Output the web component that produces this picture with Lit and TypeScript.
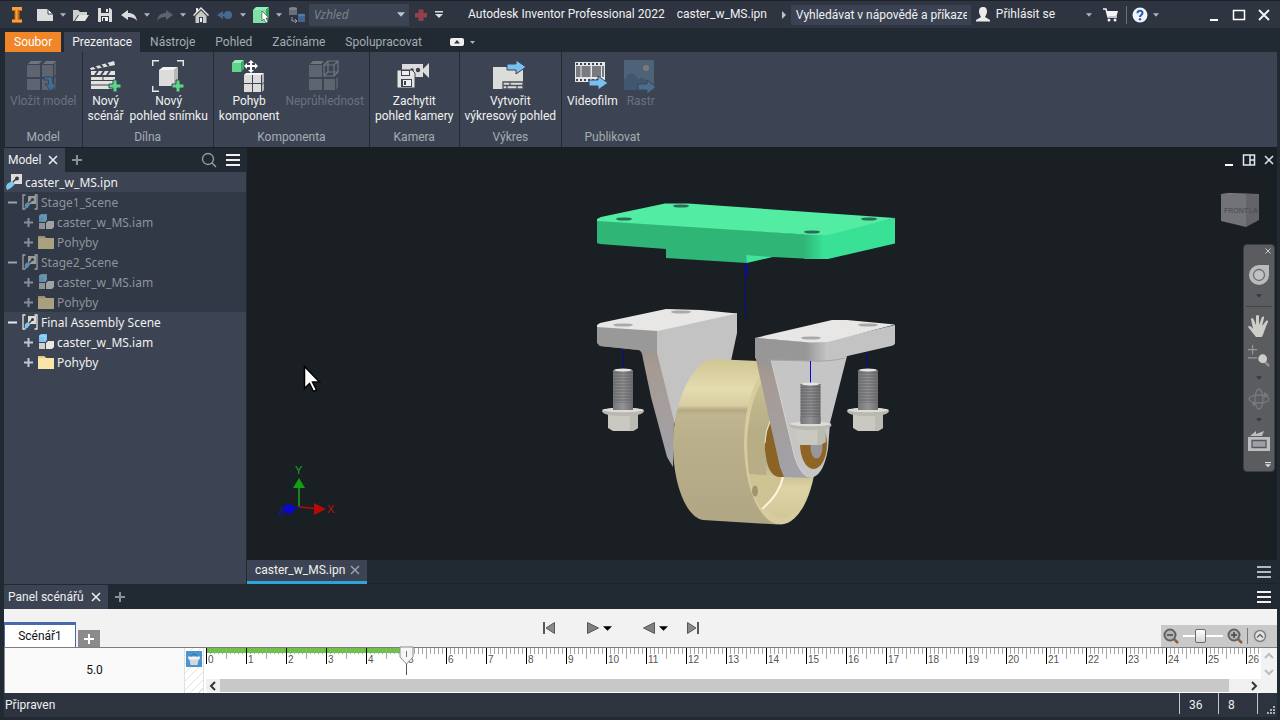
import { LitElement, html, svg, css, nothing } from "lit";
import { customElement } from "lit/decorators.js";
import { classMap } from "lit/directives/class-map.js";

const cubes = (top: string, a: string, b: string) => svg`
  <path d="M2 4l3-3h11l-3 3z" fill=${top}/><path d="M17 4l3-3h10l-3 3z" fill=${top}/>
  <path d="M1 5h13v12H1z" fill=${a}/><path d="M16 5h11v12H16z" fill=${a}/>
  <path d="M1 19h13v11H1z" fill=${a}/><path d="M16 19h11v11H16z" fill=${a}/>
  <path d="M28 4l2-3v13l-2 3zM28 19l2-3v11l-2 3z" fill=${b}/>`;

const icons: Record<string, unknown> = {
  logo: svg`<path d="M3 0h10v4h-2.500v8H13v4H3v-4h2.500V4H3z" fill="#c96a14"/><path d="M3 0h10v3H3zM6.500 3h2v10h-2zM3 13h10v2H3z" fill="#f7a13c"/>`,
  newDoc: svg`<path d="M0 2h11l5 5v7H0z" fill="#dcdcdc"/><path d="M11 2v5h5z" fill="#fff" stroke="#3a4150" stroke-width="1"/>`,
  open: svg`<path d="M0 14V3h5l2 2h7v3H5l-4 6z" fill="#cfcfcf"/><path d="M2 14l4-6h10l-4 6z" fill="#e4e4e4"/>`,
  save: svg`<path d="M1 1h12l2 2v12H1z" fill="#dcdcdc"/><path d="M4 1h8v5H4zM4 9h8v6H4z" fill="#2f3441"/><path d="M9 2h2v3H9z" fill="#eee"/><path d="M5 10h6v4H5z" fill="#f4f4f4"/><path d="M6 11h2v3H6z" fill="#2f3441"/>`,
  undo: svg`<path d="M0 8l7-5v3c5 0 8 2 9 8-2-3-5-4-9-4v3z" fill="#dcdcdc"/>`,
  redo: svg`<path d="M16 8L9 3v3C4 6 1 8 0 14c2-3 5-4 9-4v3z" fill="#5c626e"/>`,
  home: svg`<path d="M8 0l8 8-1 1-7-7-7 7-1-1 3-3V1h2v2z" fill="#e6e6e6"/><path d="M2.500 9L8 3.500 13.500 9v7h-11z" fill="#c9c9c4"/><path d="M6 10h4v6H6z" fill="#3a4150"/><path d="M7 11h2v4H7z" fill="#f0f0f0"/>`,
  back: svg`<path d="M0 8l6-4v3h4v2H6v3z" fill="#456a90"/><circle cx="11" cy="8" r="4" fill="#456a90"/>`,
  pick: svg`<path d="M0 3l3-3h13l-3 3z" fill="#8df0b4"/><path d="M0 3h13v13H0z" fill="#7fe0a6"/><path d="M13 3l3-3v12l-3 4z" fill="#35a865"/><path d="M9 4v10l2-2 2 4 2-1-2-4h3z" fill="#fff" stroke="#222" stroke-width=".5"/>`,
  material: svg`<path d="M0 1h8v7H0z" fill="#6a6e76"/><ellipse cx="4" cy="1.500" rx="4" ry="1.500" fill="#7f838a"/><path d="M3 10v4h4M6 12l2 2-2 2" fill="none" stroke="#9aa0a8"/><path d="M9 7h7v8H9z" fill="#42648e"/><ellipse cx="12.500" cy="8" rx="3.500" ry="1.300" fill="#557caa"/>`,
  redPlus: svg`<path d="M5.500 2.500h5v3.500H14v4.500h-3.500V14h-5v-3.500H2V6h3.500z" fill="#93404c"/>`,
  customize: svg`<path d="M4 4h8v1.500H4z" fill="#ddd"/><path d="M4 7h8l-4 4z" fill="#ddd"/>`,
  user: svg`<path d="M8 0c3 0 4 2 4 4.500S10.500 9 10 10l5 3v1.500H1V13l5-3C5.500 9 4 7 4 4.500S5 0 8 0z" fill="#ecebe8"/>`,
  cart: svg`<path d="M1 2h3l2 8h9" fill="none" stroke="#f4f4f4" stroke-width="1.500"/><path d="M4.500 4H16l-1.500 5H6z" fill="#f4f4f4"/><circle cx="7" cy="13" r="1.500" fill="#f4f4f4"/><circle cx="13" cy="13" r="1.500" fill="#f4f4f4"/>`,
  help: svg`<circle cx="8" cy="8" r="7.500" fill="#f2f4f8"/><path d="M5.500 6.200C5.500 3 10.500 3 10.500 6c0 2-2.500 2-2.500 4" fill="none" stroke="#2559b5" stroke-width="2"/><circle cx="8" cy="12.300" r="1.200" fill="#2559b5"/>`,
  min: svg`<path d="M4 12h8v2H4z" fill="#fff"/>`,
  max: svg`<path d="M2.500 3.500h11v9h-11z" fill="none" stroke="#fff" stroke-width="1.500"/>`,
  close: svg`<path d="M3 3l10 10M13 3L3 13" fill="none" stroke="currentColor" stroke-width="2"/>`,
  closeThin: svg`<path d="M4 4l8 8M12 4l-8 8" fill="none" stroke="currentColor" stroke-width="1.500"/>`,
  plus: svg`<path d="M3 8h10M8 3v10" fill="none" stroke="currentColor" stroke-width="2"/>`,
  search: svg`<circle cx="7" cy="7" r="5.500" fill="none" stroke="#9aa0a4" stroke-width="1.300"/><path d="M11 11l4 4" stroke="#9aa0a4" stroke-width="1.500"/>`,
  lines: svg`<path d="M1 3h14M1 8h14M1 13h14" stroke="currentColor" stroke-width="2"/>`,
  split: svg`<path d="M2.500 3h11v10h-11zM9 3v10M9 8h4.500" fill="none" stroke="#dfe8f4" stroke-width="1.500"/>`,
  insertModel: svg`${cubes("#6f757f", "#5f6570", "#565c67")}<path d="M18 17h8l1 7h4l-6 7-6-7h4l-1-4h-4z" fill="#3f6d94" stroke="#3c4453"/>`,
  clapper: svg`<path d="M1 8L25 1l1 4L2 10z" fill="#e2e2df"/><path d="M5 6l3 3M11 4.500l3 3M17 3l3 3" stroke="#3c4453" stroke-width="2"/><path d="M2 11h24v4H2z" fill="#e2e2df"/><path d="M6 15l3-4M12 15l3-4M18 15l3-4" stroke="#3c4453" stroke-width="2"/><path d="M2 17h24v12H2z" fill="#e2e2df"/><path d="M2 20.500h24M2 25h24M14 17v3" stroke="#3c4453"/><path d="M24 20h4v4h4v4h-4v4h-4v-4h-4v-4h4z" fill="#5bd688" stroke="#3c4453"/>`,
  snapshot: svg`<path d="M.7 6V.7H7M25 .7h6.300V6M.7 26v5.300H7" fill="none" stroke="#e8e8e8" stroke-width="1.400"/><path d="M7 10l4-3h15l-4 3z" fill="#f2f2f2"/><path d="M7 10h15v16H7z" fill="#dcdcdc"/><path d="M22 10l4-3v15l-4 4z" fill="#b8b8b6"/><path d="M24 20h4v4h4v4h-4v4h-4v-4h-4v-4h4z" fill="#5bd688" stroke="#3c4453"/>`,
  tweak: svg`<path d="M0 3l3-3h9l-3 3z" fill="#93f1b6"/><path d="M0 3h9v9H0z" fill="#5fd38c"/><path d="M9 3l3-3v9l-3 3z" fill="#3ca66a"/><path d="M19 0l3 3h-2v2h3V3l3 3-3 3V7h-3v3h2l-3 3-3-3h2V7h-3v2l-3-3 3-3v2h3V3h-2z" fill="#fff"/><path d="M12 15l2-2h18l-2 2z" fill="#f4f4f2"/><path d="M12 15h8v8h-8zM21 15h8v8h-8zM12 24h8v8h-8zM21 24h8v8h-8z" fill="#dcdcda"/><path d="M30 15l2-2v9l-2 2zM30 25l2-2v7l-2 2z" fill="#b5b5b3"/>`,
  opacity: svg`${cubes("#6f757f", "#5f6570", "#565c67")}<path d="M15 0h16v17H15z" fill="#3c4453"/><path d="M16 5l4-4h10v11l-4 4H16zM16 5h10v11M26 5l4-4M20 1v11h10M20 12l-4 4" fill="none" stroke="#6f757f" stroke-width="1.200"/>`,
  camera: svg`<path d="M5 4h21v13H5z" fill="#dcdcda"/><path d="M26 9l6-6v15l-6-6z" fill="#dcdcda"/><circle cx="15" cy="10" r="1.800" fill="#3c4453"/><circle cx="21" cy="10" r="2.200" fill="#3c4453"/><path d="M0 10h15l3 3v15H0z" fill="#e4e4e2" stroke="#3c4453"/><path d="M4 10h9v6H4zM4 19h11v8H4z" fill="#3c4453"/><path d="M5 11h7v4H5zM6 20h8v6H6z" fill="#eee"/><path d="M7 21h2v4H7z" fill="#3c4453"/>`,
  drawing: svg`<path d="M0 7h30v22H0z" fill="#dcdcda"/><path d="M10 22h20v7H10zM10 25.500h20M17 22v3.500M24 25.500V29M14 25.500V29" fill="none" stroke="#4a505a" stroke-width="1.300"/><path d="M14 4h9V0l10 7-10 7v-4h-9z" fill="#76c0f2" stroke="#3c4453"/>`,
  video: svg`<path d="M0 2h30v20H0z" fill="#e4e4e2"/><path d="M1 6h4.500v11H1zM6.500 6h9v11h-9zM17 6h9v11h-9zM27 6h2v11h-2z" fill="#777a80"/><path d="M1 4h28M1 20h28" stroke="#3c4453" stroke-width="2" stroke-dasharray="2 2"/><path d="M14 20h9v-4l10 7-10 7v-4h-9z" fill="#76c0f2" stroke="#3c4453"/>`,
  raster: svg`<path d="M0 0h30v30H0z" fill="#4f6378"/><circle cx="22" cy="8" r="3" fill="#7d7a76"/><path d="M0 20c5-9 10-9 14 0l4-3 5 4 7 3v6H0z" fill="#40586f"/><path d="M14 24h9v-4l9 7-9 7v-4h-9z" fill="#4c6e8c" stroke="#3c4453"/>`,
  ipn: svg`<path d="M5 0h11v10H5z" fill="#dedcd6"/><circle cx="11" cy="4.500" r="2" fill="#333a46"/><path d="M10 5l-4 4" stroke="#333a46" stroke-width="1.500"/><path d="M1 10l5-3 3 3-4 4-4 2-1-3z" fill="#7cc6ee"/>`,
  scene: svg`<path d="M3.500 1H1v14h2.500M12.500 1H15v14h-2.500" fill="none" stroke="#e6e6e2" stroke-width="1.300"/><path d="M6 2h8v8H6z" fill="#dedcd6"/><circle cx="10.500" cy="5.500" r="1.500" fill="#333a46"/><path d="M10 6l-4 4" stroke="#333a46" stroke-width="1.200"/><path d="M3 10l3-2 2.500 2-3 4-3 1z" fill="#7cc6ee"/>`,
  iam: svg`<path d="M1 2l2-2h6v6L7 8H1z" fill="#7cc6f2"/><path d="M1 2h6v6" fill="none" stroke="#a8dcf8"/><path d="M1 9h6v6H1z" fill="#d0d0cc"/><path d="M8 9l2-2h6v6l-2 2H8z" fill="#e9e7e1"/>`,
  folder: svg`<path d="M0 2h6l2 2h8v11H0z" fill="#f9e5a8"/><path d="M0 2h6l2 2H0z" fill="#e0c98a"/>`,
  wheel: svg`<path d="M11 1h10v10a10 10 0 1 1-10-10z" fill="#b9bbbd"/><circle cx="11" cy="11" r="5.500" fill="#c0c2c4" stroke="#6c6f72" stroke-width="1.300"/>`,
  hand: svg`<path d="M8 22c-3-3-5-7-8-10 1-2 3-1 5 2L3 4c1-2 2-1 3 1l2 5V1c1-1.500 2.500-1 3 0v9l3-8c1-1 2.500-.5 2 1l-2 8 4-5c1-1 2.500 0 2 1-2 4-3 7-4 10-1 3-2 5-3 6z" fill="#cfcdc8"/>`,
  zoomNav: svg`<path d="M0 5h10M5 0v10M0 14h10" stroke="#96989a" stroke-width="1.300"/><path d="M18 18l5 5" stroke="#8b8d90" stroke-width="3"/><circle cx="16" cy="15" r="4.800" fill="#cfcdc8"/>`,
  orbit: svg`<ellipse cx="11" cy="11" rx="4" ry="10" fill="none" stroke="#77797d" stroke-width="1.300"/><ellipse cx="11" cy="11" rx="10" ry="4" fill="none" stroke="#77797d" stroke-width="1.300"/><path d="M16 4l5 3-5 3zM4 15l2 4 2-4z" fill="#77797d"/>`,
  look: svg`<path d="M0 7h22v14H0z" fill="#bdbebf"/><path d="M2 6l6-5v3l8-3-2 5z" fill="#bdbebf"/><path d="M4 10.500h14v7H4z" fill="#9da1a7" stroke="#55585c" stroke-width="1.300"/>`,
  toStart: svg`<path d="M2 2h2v12H2z" fill="#58585a"/><path d="M13.500 2.500v11L5 8z" fill="#8a8a8c" stroke="#58585a"/>`,
  toEnd: svg`<path d="M12 2h2v12h-2z" fill="#58585a"/><path d="M2.500 2.500v11L11 8z" fill="#8a8a8c" stroke="#58585a"/>`,
  play: svg`<path d="M2.500 2.500v11L13.500 8z" fill="#808082" stroke="#58585a"/>`,
  reverse: svg`<path d="M13.500 2.500v11L2.500 8z" fill="#808082" stroke="#58585a"/>`,
  zoomOut: svg`<path d="M11 11l4 4" stroke="#8a6238" stroke-width="2.500"/><circle cx="7" cy="7" r="5.500" fill="#b4b4b4" stroke="#606266" stroke-width="2"/><path d="M4 7h6" stroke="#444" stroke-width="1.500"/>`,
  zoomIn: svg`<path d="M11 11l4 4" stroke="#8a6238" stroke-width="2.500"/><circle cx="7" cy="7" r="5.500" fill="#b4b4b4" stroke="#606266" stroke-width="2"/><path d="M4 7h6M7 4v6" stroke="#444" stroke-width="1.500"/>`,
  collapse: svg`<circle cx="8" cy="8" r="5.500" fill="#e4e4e4" stroke="#808080" stroke-width="1.500"/><path d="M5 9.500l3-3 3 3" fill="none" stroke="#666" stroke-width="1.500"/>`,
  up: svg`<path d="M4 10l4-4 4 4" fill="none" stroke="currentColor" stroke-width="2"/>`,
  down: svg`<path d="M4 6l4 4 4-4" fill="none" stroke="currentColor" stroke-width="2"/>`,
  left: svg`<path d="M10 4L6 8l4 4" fill="none" stroke="currentColor" stroke-width="2"/>`,
  right: svg`<path d="M6 4l4 4-4 4" fill="none" stroke="currentColor" stroke-width="2"/>`,
  caret: svg`<path d="M0 0h7L3.500 4z" fill="currentColor"/>`,
  caretBig: svg`<path d="M0 0h10L5 5z" fill="currentColor"/>`,
  caretRight: svg`<path d="M0 0v8l4-4z" fill="currentColor"/>`,
  pill: svg`<rect width="14" height="8" rx="2" fill="#efefef"/><path d="M4 5.500h6L7 2z" fill="#333"/>`,
  paint: svg`<path d="M0 0h16v16H0z" fill="#4a94cf"/><path d="M2.500 6h11l-1 3-1 5h-7l-1-5z" fill="#d4d8dc"/><path d="M2 5.500h12l-.5 3h-11z" fill="#f2f2f2"/><path d="M5 5.500c0-3 6-3 6 0" fill="none" stroke="#2f6fa8"/>`,
  grip: svg`<path d="M6 0h2v2H6zM3 3h2v2H3zM6 3h2v2H6zM0 6h2v2H0zM3 6h2v2H3zM6 6h2v2H6z" fill="#aaaeb4"/>`,
};

const icon = (name: string, w = 16, h = w, vw = w, vh = h) =>
  html`<svg width=${w} height=${h} viewBox="0 0 ${vw} ${vh}" aria-hidden="true">${icons[name]}</svg>`;

const bolt = (x: number, y: number) => svg`
  <g transform="translate(${x} ${y})">
    <rect x="-10" y="1" width="20" height="41" fill="url(#thread)"/>
    <rect x="-10" y="1" width="20" height="41" fill="url(#threadLines)"/>
    <ellipse cx="0" cy="1" rx="9" ry="1.500" fill="#e6e6e4"/>
    <path d="M-15 44h30v15l-5 3H-10l-5-3z" fill="#c9c8c1"/>
    <path d="M7 45h8v14l-5 3H7z" fill="#bbbab3"/>
    <path d="M-21 42c0-4 42-4 42 0 0 3-8 5-21 5s-21-2-21-5z" fill="#b9b8b1"/>
    <path d="M-21 41c3-3 39-3 42 0-4 3-38 3-42 0z" fill="#dddcd6"/>
    <rect x="-10" y="34" width="20" height="7" fill="url(#thread)"/>
  </g>`;

const hole = (x: number, y: number, green = false) => svg`
  <ellipse cx=${x} cy=${y} rx=${green ? 8 : 10} ry="1.600" fill=${green ? "#2f6a56" : "#a9a9a9"}/>`;

@customElement("caster-model")
class CasterModel extends LitElement {
  static styles = css`
    :host { display: block; flex: 1; min-height: 0; }
    svg { display: block; width: 100%; height: 100%; }
  `;
  render() {
    return html`<svg viewBox="247 148 1030 412" role="img" aria-label="Caster">
      <defs>
        <linearGradient id="thread"><stop offset="0" stop-color="#77777a"/><stop offset=".5" stop-color="#929294"/><stop offset="1" stop-color="#6e6e71"/></linearGradient>
        <pattern id="threadLines" width="20" height="3" patternUnits="userSpaceOnUse"><path d="M0 1h20" stroke="#5c5c61" stroke-width=".8"/></pattern>
        <linearGradient id="tread" x1="0" y1="0" x2="0" y2="1"><stop offset="0" stop-color="#cfc697"/><stop offset=".05" stop-color="#d5cb9b"/><stop offset=".18" stop-color="#e4dbb0"/><stop offset=".28" stop-color="#d8cea2"/><stop offset=".31" stop-color="#b3a982"/><stop offset=".34" stop-color="#bfb590"/><stop offset=".5" stop-color="#b9af8a"/><stop offset="1" stop-color="#b0a684"/></linearGradient>
        <linearGradient id="bore" x1="0" y1="0" x2="0" y2="1"><stop offset="0" stop-color="#cdc394"/><stop offset=".4" stop-color="#b8ae88"/><stop offset=".6" stop-color="#b2a883"/><stop offset=".8" stop-color="#ddd3a5"/><stop offset="1" stop-color="#d1c798"/></linearGradient>
        <linearGradient id="legShade" x1="0" y1="0" x2="0" y2="1"><stop offset="0" stop-color="#8f8f8f"/><stop offset=".3" stop-color="#a69b93"/><stop offset="1" stop-color="#a2a2aa"/></linearGradient>
        <linearGradient id="corner"><stop offset="0" stop-color="#979797"/><stop offset="1" stop-color="#c6c6c6"/></linearGradient>
        <linearGradient id="greenCorner"><stop offset="0" stop-color="#2fb677"/><stop offset="1" stop-color="#38e196"/></linearGradient>
      </defs>

      <path d="M745.500 262v55" stroke="#0a0a88"/><path d="M746.500 262v13" stroke="#0505d8" stroke-width="1.500"/>

      <path d="M657 330l80-17v20l-6 28-26 2-24 36-7 26-17-65z" fill="#c3c3c3"/>
      <path d="M597 325l60 5v23l17 68-1 46-6-10-16-60-8-38q-1-9-5-9l-38-4-3-4z" fill="url(#legShade)"/>
      <path d="M597 325l60 5v22l-17-2-40-4-3-3z" fill="#999"/>
      <path d="M597 325l3-2 66-14 35 1 36 3.500-79 17.500-61-4z" fill="#e8e7e5"/>
      ${hole(681, 312)}${hole(623, 325)}

      <path d="M713 359c-20 2-40 42-40 85 0 40 13 73 30 76l75 4.500 20-80-25-83z" fill="url(#tread)"/>
      <ellipse cx="780.500" cy="443" rx="36.500" ry="81.500" fill="#d6cc9e"/>
      <ellipse cx="782" cy="443" rx="34.500" ry="75" fill="url(#bore)"/>
      <path d="M748 428h18v48l-17-2q-3-23-1-46z" fill="#b7ad87"/>
      <path d="M749 474l33 2q-4 20-20 34-10-15-13-36z" fill="#cdc393"/>
      <path d="M783 477q-4 18-21 32" fill="none" stroke="#fbf6dc" stroke-width="2"/>
      <ellipse cx="755" cy="491" rx="3" ry="5.500" fill="#a0956e"/>
      <path d="M771 421q-9 20-5 36 3 20 14 20h6l-4-40z" fill="#8b6425"/>
      <path d="M770 421q-5 11-5 22" fill="none" stroke="#eee6c6"/>

      <path d="M771 359l76-3-17 67-2 26q-5 29-19 29-12 0-18-32z" fill="#c5c5c5"/>
      <path d="M755 338l16 20 9 38 12 50q6 30 19 32l-27-1-4-10-9-40-16-72z" fill="url(#legShade)"/>
      <path d="M771 360l9 36 12 50q5 26 16 31" fill="none" stroke="#d2d2d2"/>
      <path d="M755 338l55 4v19l-39-1-4 4-12-6z" fill="#979797"/>
      <path d="M806 342h22v18.500q-10 1-22 0z" fill="url(#corner)"/>
      <path d="M828 341l67-16v18q0 2-4 3l-63 14.500z" fill="#c3c3c3"/>
      <path d="M771 360l38 1q20 1 36-3" fill="none" stroke="#a5a5a5"/>
      <path d="M755 338l77-18h15l48 4.500-67 17.500-18 .5z" fill="#e8e7e5"/>
      ${hole(868, 325)}${hole(811, 338)}

      <ellipse cx="813.500" cy="444" rx="13.500" ry="25" fill="#8f6524"/>
      <ellipse cx="816.500" cy="447" rx="6" ry="11.500" fill="#97979b"/>

      <path d="M623.500 349v20M867.500 352v18" stroke="#0b0b90"/><path d="M810.500 361v23" stroke="#0808d8"/>
      ${bolt(623, 369)}${bolt(868, 369)}${bolt(810.500, 383)}

      <path d="M597 219l216 16v24l-40-2-26 6-81-5v-9l-66-5-3-1z" fill="#2fb677"/>
      <path d="M746 255l26 2-25 5.500z" fill="#3ee59a"/>
      <path d="M804 234h20v25h-20z" fill="url(#greenCorner)"/>
      <path d="M822 235l73-17v25.500L828 259h-6z" fill="#38e196"/>
      <path d="M597 219l4-2 64-13.500h23l207 14.500-67 17h-16L597 221z" fill="#52eca2"/>
      ${hole(681, 206, true)}${hole(624, 219, true)}${hole(869, 219, true)}${hole(812, 232, true)}
    </svg>`;
  }
}

type Tool = { icon: string; lines: string[]; off?: boolean };
const groups: { title: string; tools: Tool[] }[] = [
  { title: "Model", tools: [{ icon: "insertModel", lines: ["Vložit model"], off: true }] },
  { title: "Dílna", tools: [{ icon: "clapper", lines: ["Nový", "scénář"] }, { icon: "snapshot", lines: ["Nový", "pohled snímku"] }] },
  { title: "Komponenta", tools: [{ icon: "tweak", lines: ["Pohyb", "komponent"] }, { icon: "opacity", lines: ["Neprůhlednost"], off: true }] },
  { title: "Kamera", tools: [{ icon: "camera", lines: ["Zachytit", "pohled kamery"] }] },
  { title: "Výkres", tools: [{ icon: "drawing", lines: ["Vytvořit", "výkresový pohled"] }] },
  { title: "Publikovat", tools: [{ icon: "video", lines: ["Videofilm"] }, { icon: "raster", lines: ["Rastr"], off: true }] },
];

const quick = [
  ["newDoc", "Nový"], ["caret", "Další"], ["open", "Otevřít"], ["save", "Uložit"], ["undo", "Zpět"], ["caret", "Další"],
  ["redo", "Znovu"], ["caret", "Další"], ["home", "Domů"], ["back", "Návrat"], ["caret", "Další"], ["pick", "Výběr"], ["caret", "Další"], ["material", "Materiál"],
];

type Row = { level: number; icon: string; text: string; dim?: boolean; open?: boolean };
const stage = (text: string, dim: boolean): Row[] => [
  { level: 1, icon: "scene", text, dim, open: true },
  { level: 2, icon: "iam", text: "caster_w_MS.iam", dim },
  { level: 2, icon: "folder", text: "Pohyby", dim },
];
const rows: Row[] = [
  { level: 0, icon: "ipn", text: "caster_w_MS.ipn" },
  ...stage("Stage1_Scene", true), ...stage("Stage2_Scene", true), ...stage("Final Assembly Scene", false),
];

@customElement("app-root")
class AppRoot extends LitElement {
  static styles = css`
    :host { display: block; font: 12px/15px Roboto, "Open Sans", sans-serif; color: #f0f0f0; }
    * { box-sizing: border-box; }
    svg { display: block; flex: none; }
    button { font: inherit; color: inherit; background: none; border: 0; padding: 0; margin: 0; display: flex; align-items: center; justify-content: center; white-space: nowrap; }
    .app { display: flex; flex-direction: column; min-height: 100vh; background: #212a33; padding: 0 3px 3px 4px; }

    .title { display: flex; align-items: center; height: 28px; margin: 0 -3px 4px -4px; padding-left: 5px; background: #2f3441; border-top: 1px solid #1d222a; white-space: nowrap; }
    .ib { width: 24px; height: 24px; flex: none; }
    .ib.caret { width: 12px; color: #a9b8c8; }
    .first { margin-right: 4px; }
    .look { appearance: none; width: 100px; height: 22px; border: 0; border-radius: 0; padding: 0 5px; margin: 0; font: italic 12px/22px "Open Sans", sans-serif; color: #7f858e; background: #3c4453; }
    .lookBox { display: flex; align-items: center; }
    .lookBox svg { margin-left: -12px; margin-right: 4px; color: #b8c6d6; }
    .name { margin-left: 23px; }
    .file { margin-left: 12px; flex: 1; }
    .find { display: flex; align-items: center; gap: 5px; color: #c0c4ca; }
    .find input { width: 180px; height: 20px; border: 0; padding: 0 4px 0 5px; font: inherit; color: #f0f0f0; background: #3b4353; }
    .sign { gap: 5px; margin-left: 4px; height: 24px; }
    .sign .caretIcon { margin-left: 26px; color: #a9b8c8; }
    .cart { margin-left: 6px; }
    .help { margin-left: 4px; padding-left: 2px; border-left: 1px solid #6b7078; height: 18px; }
    .win { display: flex; margin-left: 40px; gap: 1px; padding-right: 4px; }

    .tabs { display: flex; height: 20px; padding-left: 1px; color: #a6abb1; }
    .tab { padding: 0 10px; height: 20px; }
    .tab.file0 { background: #f08628; color: #fff; padding: 0 9px; margin-right: 3px; }
    .tab.on { background: #3c4453; color: #f2f2f2; padding: 0 8px; }
    .tabOpt { gap: 6px; margin-left: 18px; color: #a9b1ba; }

    .ribbon { display: flex; height: 96px; margin-left: 1px; background: #3c4453; border-bottom: 1px solid #191f26; }
    .group { display: flex; flex-direction: column; justify-content: space-between; border-right: 1px solid #222a33; padding: 8px 2px 2px; color: #a6abb1; text-align: center; }
    .group:last-child { border-right: 0; }
    .tools { display: flex; justify-content: center; }
    .tool { flex-direction: column; justify-content: flex-start; padding: 0 3px; color: #f0f0f0; }
    .tool.off { color: #6b717c; }
    .groupName { line-height: 16px; }

    .main { display: flex; flex: 1; min-height: 0; }
    .side { width: 242px; flex: none; display: flex; flex-direction: column; background: #3c4453; }
    .strip { display: flex; align-items: center; height: 24px; background: #212a33; }
    .ptab { display: flex; align-items: center; height: 24px; background: #3c4453; padding: 0 4px; gap: 4px; }
    .ptab button { width: 16px; }
    .add { color: #8b9096; margin-left: 4px; width: 16px; }
    .grow { flex: 1; }
    .right { gap: 8px; display: flex; padding-right: 5px; }
    .tree { margin: 0; padding: 0; list-style: none; font-family: "Noto Sans", "Open Sans", sans-serif; }
    .row { display: flex; align-items: center; height: 20px; gap: 3px; padding-left: 2px; }
    .row.l2 { padding-left: 18px; }
    .row.dim { background: #313846; color: #8f949b; }
    .row.dim svg { opacity: .6; }
    .twist { width: 13px; height: 13px; color: #e4eaf2; }
    .row.l2 .twist { color: #b9c9dc; }

    .stage { flex: 1; min-width: 0; margin-left: 1px; display: flex; flex-direction: column; position: relative; background: #1a1f23; }
    .docTabs { display: flex; align-items: center; height: 24px; background: #212a33; border-bottom: 1px solid #1b222a; }
    .docTab { display: flex; align-items: center; gap: 2px; height: 24px; padding: 0 4px 0 8px; background: #3c4453; border-bottom: 3px solid #2ea3dc; }
    .docTab button { color: #99a0a8; }
    .docTabs .right { color: #b4bac2; }
    .winIn { position: absolute; top: 4px; right: 0; display: flex; gap: 4px; color: #dfe8f4; }
    .cube { position: absolute; top: 44px; right: 17px; }
    .triad { position: absolute; left: 30px; bottom: 65px; }
    .cursor { position: absolute; left: 56px; top: 217px; }
    .nav { position: absolute; top: 96px; right: 2px; width: 32px; height: 228px; display: flex; flex-direction: column; align-items: center; justify-content: space-between; padding: 1px 0; border-radius: 4px; background: #5a5c60; border: 1px solid #3d4043; color: #36393d; }
    .nav .end { align-self: flex-end; width: 12px; height: 10px; color: #c9c9c9; }
    .rule { width: 26px; height: 1px; background: #424548; }

    .panel { margin-top: 1px; }
    .controls { display: flex; align-items: flex-end; justify-content: space-between; height: 39px; background: #f2f2f2; border-bottom: 1px solid #7e7e7e; }
    .scenes { display: flex; align-items: flex-end; gap: 2px; }
    .scene { width: 72px; height: 25px; background: #fff; color: #111; border: 1px solid #4a68ae; border-top: 3px solid #4a68ae; border-bottom: 0; }
    .addScene { width: 22px; height: 17px; background: #8b8b8b; color: #fff; }
    .play { display: flex; align-items: center; align-self: center; padding-right: 20px; color: #000; gap: 28px; }
    .play .pair { display: flex; gap: 1px; }
    .play .tail { gap: 16px; display: flex; }
    .play .drop { width: 11px; }
    .zoom { display: flex; align-items: center; height: 22px; background: #c9c9c9; padding: 0 8px 0 2px; gap: 4px; width: 116px; }
    .zoom input { appearance: none; width: 40px; height: 16px; margin: 0; background: linear-gradient(#fff, #fff) center / 100% 2px no-repeat; }
    .zoom input::-webkit-slider-thumb { appearance: none; width: 11px; height: 14px; border: 1px solid #6b6b6b; border-radius: 2px; background: linear-gradient(#fff, #d5d5d5); }
    .sep { width: 1px; height: 16px; background: #777; }

    .time { display: flex; height: 45px; background: #fff; color: #111; }
    .value { width: 180px; background: #fafafa; display: flex; align-items: center; justify-content: center; border-left: 1px solid #8a8a8a; }
    .mark { width: 20px; padding: 3px 1px; border: solid #e0e0e0; border-width: 0 1px; background: repeating-linear-gradient(135deg, #fff 0 5px, #e2e2e2 5px 6px); margin-right: 2px; }
    .track { flex: 1; min-width: 0; display: flex; flex-direction: column; justify-content: space-between; padding-bottom: 1px; }
    .ruler { display: flex; overflow: hidden; height: 31px;
      background: repeating-linear-gradient(90deg, #a6a6a6 0 1px, transparent 1px 4px) 0 0 / 100% 6px no-repeat; }
    .unit { flex: none; width: 40px; height: 16px; border-left: 1px solid #000; padding: 6px 0 0 1px; font: 10px/11px "Liberation Sans", Arial, sans-serif; color: #555;
      background: linear-gradient(#a6a6a6, #a6a6a6) 19px 0 / 1px 11px no-repeat; }
    .unit.done { background: linear-gradient(#a6a6a6, #a6a6a6) 19px 0 / 1px 11px no-repeat, repeating-linear-gradient(90deg, #66c63c 0 3px, #8fae80 3px 4px) 0 0 / 100% 5px no-repeat; }
    .rulerBox { position: relative; }
    .head { position: absolute; top: -2px; }
    .hbar { display: flex; height: 13px; background: #f0f0f0; align-items: center; color: #333; }
    .hbar button { width: 14px; }
    .thumb { flex: 1; height: 13px; background: #c8c8c8; margin-right: 18px; }
    .vbar { width: 16px; background: #f2f2f2; color: #bdbdbd; display: flex; flex-direction: column; justify-content: space-between; padding-bottom: 13px; }

    .status { display: flex; height: 24px; background: #2e3340; line-height: 24px; padding-left: 1px; }
    .cell { width: 39px; border-left: 1px solid #c4c6ca; padding-left: 9px; height: 21px; }
    .cell.last { width: 20px; display: flex; align-items: flex-end; justify-content: flex-end; padding-right: 2px; }
  `;

  render() {
    return html`<div class="app">
      <header class="title">
        <button class="ib first" aria-label="Inventor">${icon("logo")}</button>
        ${quick.map(([n, l]) => n === "caret"
          ? html`<button class="ib caret" aria-label=${l}>${icon("caret", 6, 4, 7, 4)}</button>`
          : html`<button class="ib" aria-label=${l}>${icon(n)}</button>`)}
        <label class="lookBox"><select class="look" aria-label="Vzhled"><option>Vzhled</option></select>${icon("caret", 8, 5, 7, 4)}</label>
        <button class="ib" aria-label="Přidat">${icon("redPlus", 16)}</button>
        <button class="ib caret" aria-label="Přizpůsobit">${icon("customize")}</button>
        <span class="name">Autodesk Inventor Professional 2022</span>
        <span class="file">caster_w_MS.ipn</span>
        <label class="find">${icon("caretRight", 4, 8)}<input type="text" aria-label="Hledat" .value=${"Vyhledávat v nápovědě a příkaze"}></label>
        <button class="sign">${icon("user")}<span>Přihlásit se</span><span class="caretIcon">${icon("caret", 6, 4, 7, 4)}</span></button>
        <button class="ib cart" aria-label="Košík">${icon("cart")}</button>
        <button class="ib help" aria-label="Nápověda">${icon("help")}</button>
        <button class="ib caret" aria-label="Další">${icon("caret", 6, 4, 7, 4)}</button>
        <div class="win">
          <button class="ib" aria-label="Minimalizovat">${icon("min")}</button>
          <button class="ib" aria-label="Maximalizovat">${icon("max")}</button>
          <button class="ib" aria-label="Zavřít">${icon("close")}</button>
        </div>
      </header>
      <nav class="tabs">
        <button class="tab file0">Soubor</button>
        <button class="tab on">Prezentace</button>
        ${["Nástroje", "Pohled", "Začínáme", "Spolupracovat"].map((t) => html`<button class="tab">${t}</button>`)}
        <button class="tabOpt" aria-label="Pás karet">${icon("pill", 14, 8)}${icon("caret", 5, 3, 7, 4)}</button>
      </nav>
      <section class="ribbon">
        ${groups.map((g) => html`<div class="group">
          <div class="tools">${g.tools.map((t) => html`<button class=${classMap({ tool: true, off: !!t.off })} ?disabled=${t.off}>
            ${icon(t.icon, 34)}${t.lines.map((l) => html`<span>${l}</span>`)}
          </button>`)}</div>
          <div class="groupName">${g.title}</div>
        </div>`)}
      </section>
      <main class="main">
        <aside class="side">
          <div class="strip">
            <div class="ptab"><span>Model</span><button aria-label="Zavřít">${icon("closeThin")}</button></div>
            <button class="add" aria-label="Přidat panel">${icon("plus")}</button>
            <span class="grow"></span>
            <div class="right"><button aria-label="Hledat">${icon("search")}</button><button aria-label="Nabídka">${icon("lines")}</button></div>
          </div>
          <ul class="tree">
            ${rows.map((r) => html`<li class=${classMap({ row: true, dim: !!r.dim, l2: r.level === 2 })}>
              ${r.level ? html`<button class="twist" aria-label="Rozbalit">
                <svg width="9" height="9" viewBox="0 0 9 9"><path d=${r.open ? "M0 4.500h9" : "M0 4.500h9M4.500 0v9"} stroke="currentColor" stroke-width="2"/></svg></button>` : nothing}
              ${icon(r.icon)}<span>${r.text}</span>
            </li>`)}
          </ul>
        </aside>
        <section class="stage">
          <caster-model></caster-model>
          <div class="winIn">
            <button aria-label="Minimalizovat">${icon("min")}</button><button aria-label="Dlaždice">${icon("split")}</button><button aria-label="Zavřít">${icon("closeThin")}</button>
          </div>
          <svg class="cube" width="40" height="36" viewBox="0 0 40 36">
            <path d="M1 2l8-1 30 1-13 2z" fill="#85878a"/><path d="M1 2h25v33L1 29z" fill="#717376"/><path d="M26 2h13v26l-13 7z" fill="#626467"/>
            <text x="4" y="21" font-size="7" font-family="Liberation Sans" fill="#46484c">FRONT</text><text x="29" y="21" font-size="7" font-family="Liberation Sans" fill="#46484c">LA</text>
          </svg>
          <svg class="triad" width="60" height="56" viewBox="0 0 60 56">
            <path d="M22 44V20" stroke="#18a818" stroke-width="1.500"/><path d="M22 15l-6 10h12z" fill="#12a012"/>
            <path d="M22 44l22 2" stroke="#b00c0c" stroke-width="1.500"/><path d="M37 40l12 6-12 6z" fill="#b80808"/>
            <path d="M22 44l-10 3" stroke="#0a0ae0" stroke-width="1.500"/><circle cx="12" cy="46" r="5" fill="#0808d0"/>
            <text x="18" y="11" font-size="11" font-family="Liberation Sans" fill="#18a818">Y</text>
            <text x="50" y="50" font-size="11" font-family="Liberation Sans" fill="#c01010">X</text>
            <text x="2" y="52" font-size="10" font-family="Liberation Sans" fill="#0a0ae8">Z</text>
          </svg>
          <svg class="cursor" width="18" height="28" viewBox="0 0 18 28"><path d="M1.500 1.500v22l5-5 4 8 3-1.500-4-8h7z" fill="#fff" stroke="#000" stroke-width="1.500"/></svg>
          <div class="nav">
            <button class="end" aria-label="Zavřít">${icon("close", 8, 8, 16, 16)}</button>
            <button aria-label="Kolo">${icon("wheel", 22)}</button>${icon("caret", 6, 4, 7, 4)}<span class="rule"></span>
            <button aria-label="Posun">${icon("hand", 22)}</button>
            <button aria-label="Zoom">${icon("zoomNav", 22, 22, 24, 24)}</button>${icon("caret", 6, 4, 7, 4)}
            <button aria-label="Orbit">${icon("orbit", 22)}</button>${icon("caret", 6, 4, 7, 4)}
            <button aria-label="Pohled na">${icon("look", 22)}</button>
            <button class="end" aria-label="Možnosti">${icon("customize", 12, 12, 16, 16)}</button>
          </div>
          <div class="docTabs">
            <div class="docTab"><span>caster_w_MS.ipn</span><button aria-label="Zavřít">${icon("closeThin")}</button></div>
            <span class="grow"></span><div class="right"><button aria-label="Nabídka">${icon("lines")}</button></div>
          </div>
        </section>
      </main>
      <section class="panel">
        <div class="strip">
          <div class="ptab"><span>Panel scénářů</span><button aria-label="Zavřít">${icon("closeThin")}</button></div>
          <button class="add" aria-label="Přidat panel">${icon("plus")}</button>
          <span class="grow"></span><div class="right"><button aria-label="Nabídka">${icon("lines")}</button></div>
        </div>
        <div class="controls">
          <div class="scenes"><button class="scene">Scénář1</button><button class="addScene" aria-label="Přidat scénář">${icon("plus")}</button></div>
          <div class="play">
            <button aria-label="Začátek">${icon("toStart")}</button>
            <div class="pair"><button aria-label="Přehrát">${icon("play")}</button><button class="drop" aria-label="Možnosti">${icon("caretBig", 9, 5, 10, 5)}</button></div>
            <div class="tail">
              <div class="pair"><button aria-label="Přehrát zpět">${icon("reverse")}</button><button class="drop" aria-label="Možnosti">${icon("caretBig", 9, 5, 10, 5)}</button></div>
              <button aria-label="Konec">${icon("toEnd")}</button>
            </div>
          </div>
          <div class="zoom">
            <button aria-label="Zmenšit">${icon("zoomOut")}</button><input type="range" min="0" max="100" value="42" aria-label="Měřítko"><button aria-label="Zvětšit">${icon("zoomIn")}</button>
            <span class="sep"></span><button aria-label="Sbalit">${icon("collapse")}</button>
          </div>
        </div>
        <div class="time">
          <div class="value">5.0</div>
          <div class="mark">${icon("paint")}</div>
          <div class="track">
            <div class="rulerBox">
              <div class="ruler">${Array.from({ length: 27 }, (_, i) => html`<span class=${classMap({ unit: true, done: i < 5 })}>${i}</span>`)}</div>
              <svg class="head" style="left:${5 * 40 - 7}px" width="15" height="30" viewBox="0 0 15 30"><path d="M7.500 17v12" stroke="#555"/><path d="M1 1h13v10l-6.500 7L1 11z" fill="#f6f6f6" stroke="#8c8c8c"/><path d="M7.500 5v6" stroke="#777"/></svg>
            </div>
            <div class="hbar"><button aria-label="Doleva">${icon("left")}</button><span class="thumb"></span><button aria-label="Doprava">${icon("right")}</button></div>
          </div>
          <div class="vbar"><button aria-label="Nahoru">${icon("up")}</button><button aria-label="Dolů">${icon("down")}</button></div>
        </div>
      </section>
      <footer class="status"><span class="grow">Připraven</span><span class="cell">36</span><span class="cell">8</span><span class="cell last">${icon("grip", 8)}</span></footer>
    </div>`;
  }
}
